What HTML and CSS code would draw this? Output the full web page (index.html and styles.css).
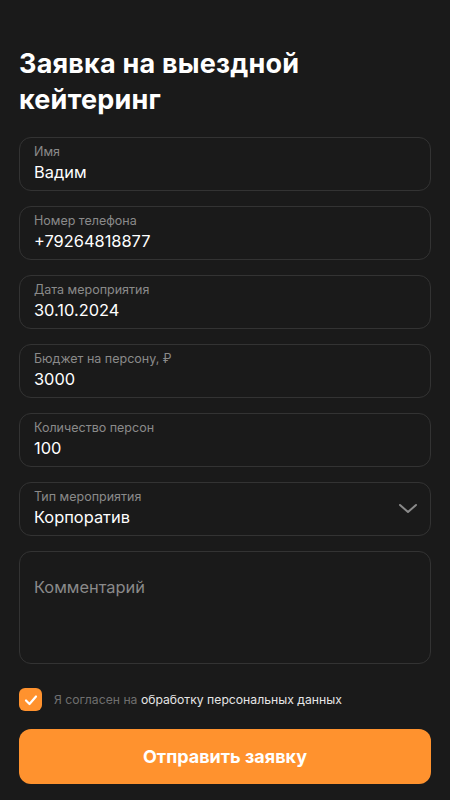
FILE: index.html
```html
<!DOCTYPE html>
<html lang="ru">
<head>
  <meta charset="UTF-8">
  <meta name="viewport" content="width=device-width, initial-scale=1.0">
  <title>Заявка на выездной кейтеринг</title>
  <link rel="stylesheet" href="styles.css">
</head>
<body>
  <div class="page">
    <h1>Заявка на выездной кейтеринг</h1>
    <form class="form">
      <div class="field">
        <span class="field-label">Имя</span>
        <span class="field-value">Вадим</span>
      </div>
      <div class="field">
        <span class="field-label">Номер телефона</span>
        <span class="field-value">+79264818877</span>
      </div>
      <div class="field">
        <span class="field-label">Дата мероприятия</span>
        <span class="field-value">30.10.2024</span>
      </div>
      <div class="field">
        <span class="field-label">Бюджет на персону, ₽</span>
        <span class="field-value">3000</span>
      </div>
      <div class="field">
        <span class="field-label">Количество персон</span>
        <span class="field-value">100</span>
      </div>
      <div class="field field-select">
        <div class="field-text">
          <span class="field-label">Тип мероприятия</span>
          <span class="field-value">Корпоратив</span>
        </div>
        <svg class="chevron" width="20" height="12" viewBox="0 0 20 12">
          <path d="M2 2l8 7 8-7" fill="none" stroke="#8a8a8a" stroke-width="2" stroke-linecap="round" stroke-linejoin="round"/>
        </svg>
      </div>
      <div class="field field-comment">
        <span class="placeholder">Комментарий</span>
      </div>
      <label class="agree">
        <span class="checkbox">
          <svg width="14" height="12" viewBox="0 0 14 12">
            <path d="M2 6.5l3.5 3.5L12 2.5" fill="none" stroke="#fff" stroke-width="2.2" stroke-linecap="round" stroke-linejoin="round"/>
          </svg>
        </span>
        <span class="agree-text">Я согласен на <span class="agree-link">обработку персональных данных</span></span>
      </label>
      <button type="button" class="submit">Отправить заявку</button>
    </form>
  </div>
</body>
</html>
```

FILE: styles.css
```css
* {
  box-sizing: border-box;
}

body {
  margin: 0;
  background-color: #1a1a1a;
  color: #fff;
  font-family: Inter, "Noto Sans", sans-serif;
}

.page {
  padding: 46px 19px 16px;
}

h1 {
  margin: 0 0 19px;
  font-size: 27px;
  line-height: 36px;
  font-weight: 700;
  letter-spacing: 0.2px;
}

.form {
  display: flex;
  flex-direction: column;
  gap: 15px;
}

.field {
  height: 54px;
  border: 1px solid #333;
  border-radius: 12px;
  padding: 6px 14px 0;
  display: flex;
  flex-direction: column;
}

.field-label {
  font-size: 12.5px;
  line-height: 16px;
  color: #8a8a8a;
}

.field-value {
  font-size: 16.4px;
  line-height: 22px;
  margin-top: 1px;
}

.field-select {
  flex-direction: row;
  align-items: flex-start;
  justify-content: space-between;
}

.field-text {
  display: flex;
  flex-direction: column;
}

.chevron {
  margin-top: 14px;
  margin-right: -2px;
}

.field-comment {
  height: 113px;
  padding-top: 23px;
}

.placeholder {
  font-size: 16.4px;
  line-height: 24px;
  color: #8a8a8a;
}

.agree {
  display: flex;
  align-items: center;
  gap: 12px;
  margin-top: 9px;
}

.checkbox {
  width: 23px;
  height: 23px;
  border-radius: 6px;
  background-color: #ff922e;
  display: flex;
  align-items: center;
  justify-content: center;
}

.agree-text {
  font-size: 12.2px;
  color: #6f6f6f;
}

.agree-link {
  color: #e6e6e6;
}

.submit {
  margin-top: 3px;
  height: 55px;
  border: none;
  border-radius: 12px;
  background-color: #ff922e;
  color: #fff;
  font-family: inherit;
  font-size: 18px;
  font-weight: 700;
  cursor: pointer;
}
```
